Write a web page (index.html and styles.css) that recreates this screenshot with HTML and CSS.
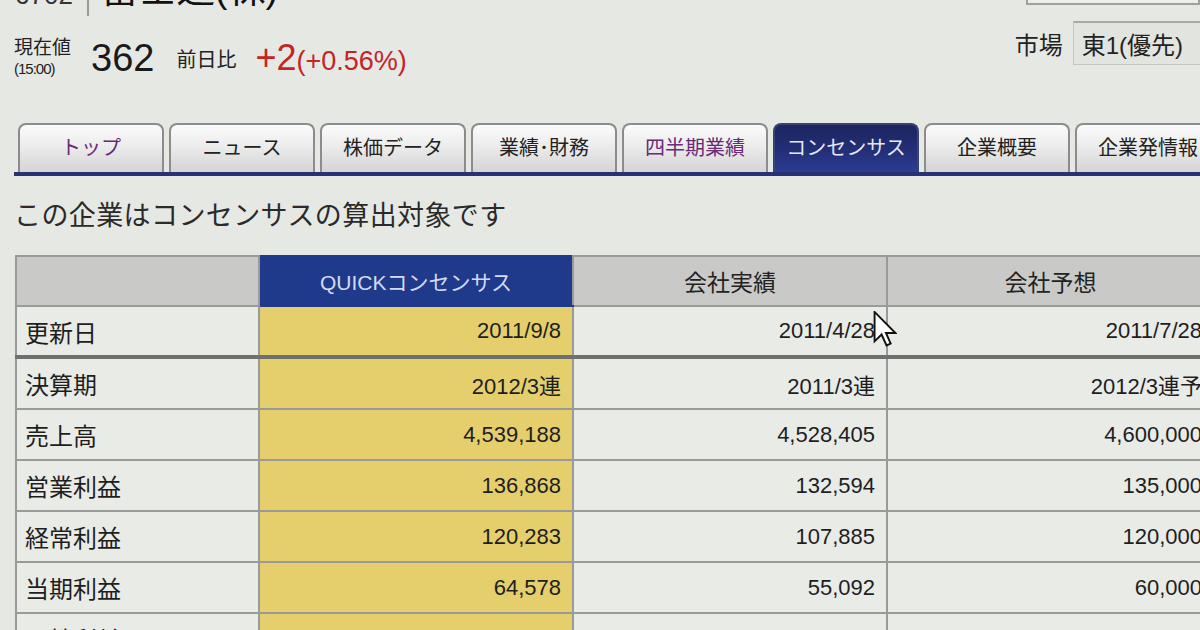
FILE: index.html
```html
<!DOCTYPE html>
<html lang="ja">
  <head>
    <meta charset="UTF-8" />
    <title>富士通(株) コンセンサス</title>
    <link rel="stylesheet" href="styles.css">
  </head>
  <body>
    <div class="page">
      <!-- Stock title, mostly scrolled off the top -->
      <div class="title-row">
        <span class="code">6702</span>
        <span class="sep"></span>
        <span class="name">富士通(株)</span>
        <div class="search-box"></div>
      </div>

      <!-- Price line -->
      <div class="quote-row">
        <div class="now-label">
          <span>現在値</span>
          <span class="time">(15:00)</span>
        </div>
        <span class="price">362</span>
        <span class="chg-label">前日比</span>
        <span class="chg"><span class="chg-big">+2</span>(+0.56%)</span>
        <div class="market">
          <span>市場</span>
          <span class="market-box">東1(優先)</span>
        </div>
      </div>

      <!-- Tabs -->
      <ul class="tabs">
        <li class="tab visited">トップ</li>
        <li class="tab">ニュース</li>
        <li class="tab">株価データ</li>
        <li class="tab">業績･財務</li>
        <li class="tab visited">四半期業績</li>
        <li class="tab active">コンセンサス</li>
        <li class="tab">企業概要</li>
        <li class="tab">企業発情報</li>
      </ul>

      <h2 class="lead">この企業はコンセンサスの算出対象です</h2>

      <div class="table-wrap">
        <table class="consensus">
          <thead>
            <tr>
              <th class="col-label"></th>
              <th class="col-quick">QUICKコンセンサス</th>
              <th class="col-actual">会社実績</th>
              <th>会社予想</th>
            </tr>
          </thead>
          <tbody>
            <tr class="row-updated">
              <td class="label">更新日</td>
              <td class="quick">2011/9/8</td>
              <td>2011/4/28</td>
              <td>2011/7/28</td>
            </tr>
            <tr>
              <td class="label">決算期</td>
              <td class="quick">2012/3連</td>
              <td>2011/3連</td>
              <td>2012/3連予</td>
            </tr>
            <tr>
              <td class="label">売上高</td>
              <td class="quick">4,539,188</td>
              <td>4,528,405</td>
              <td>4,600,000</td>
            </tr>
            <tr>
              <td class="label">営業利益</td>
              <td class="quick">136,868</td>
              <td>132,594</td>
              <td>135,000</td>
            </tr>
            <tr>
              <td class="label">経常利益</td>
              <td class="quick">120,283</td>
              <td>107,885</td>
              <td>120,000</td>
            </tr>
            <tr>
              <td class="label">当期利益</td>
              <td class="quick">64,578</td>
              <td>55,092</td>
              <td>60,000</td>
            </tr>
            <tr>
              <td class="label">一株利益(円)</td>
              <td class="quick">31.20</td>
              <td>26.62</td>
              <td>29.00</td>
            </tr>
          </tbody>
        </table>

        <!-- mouse pointer over the table -->
        <svg class="cursor" width="24" height="36" viewBox="0 0 12 19">
          <path d="M0.5 0.5 L0.5 16 L4.2 12.4 L6.8 18.2 L9 17.2 L6.5 11.6 L11.5 11.6 Z" fill="#fff" stroke="#111" stroke-width="1" stroke-linejoin="miter"/>
        </svg>
      </div>
    </div>
  </body>
</html>
```

FILE: styles.css
```css
html, body {
  margin: 0;
  height: 100%;
  overflow: hidden;
}
body {
  background-color: #e6e8e4;
  color: #1c1c1c;
  font-family: "Liberation Sans", "Noto Sans CJK JP", sans-serif;
}
.page {
  padding-left: 14px;
  width: 1300px;
}

/* title row (cut off at the top) */
.title-row {
  display: flex;
  align-items: flex-end;
  height: 18px;
  margin-top: -26px;
  padding-top: 26px;
  overflow: hidden;
}
.code {
  font-size: 26px;
  line-height: 26px;
  color: #333;
  margin-bottom: 10px;
  margin-left: 1px;
}
.sep {
  width: 2px;
  height: 42px;
  background-color: #9a9a9a;
  margin-left: 14px;
  align-self: flex-end;
  margin-bottom: 2px;
}
.name {
  font-size: 38px;
  line-height: 38px;
  margin-left: 12px;
  margin-bottom: 10px;
  color: #111;
}
.search-box {
  margin-left: auto;
  width: 170px;
  height: 30px;
  margin-right: 114px;
  margin-bottom: 13px;
  border: 2px solid #a0a0a0;
  background-color: #eceeea;
}

/* price row */
.quote-row {
  display: flex;
  align-items: center;
  margin-top: 15px;
  height: 50px;
}
.now-label {
  display: flex;
  flex-direction: column;
  font-size: 19px;
  line-height: 22px;
  color: #222;
}
.now-label .time {
  font-size: 15px;
  line-height: 20px;
  letter-spacing: -1px;
}
.price {
  font-size: 38px;
  margin-left: 20px;
  color: #1a1a1a;
}
.chg-label {
  font-size: 20px;
  margin-left: 22px;
  color: #222;
}
.chg {
  margin-left: 19px;
  color: #c42424;
  font-size: 27px;
}
.chg-big {
  font-size: 36px;
}
.market {
  margin-left: auto;
  margin-right: 100px;
  display: flex;
  align-items: center;
  font-size: 24px;
  margin-top: -30px;
  color: #222;
}
.market-box {
  margin-left: 10px;
  padding: 3px 30px 3px 8px;
  border: 1px solid #c4c6c2;
  border-top: 2px solid #a8aaa6;
  background-color: #e2e4e0;
}

/* tabs */
.tabs {
  list-style: none;
  margin: 40px 0 0 0;
  padding: 0 0 0 4px;
  display: flex;
  gap: 5px;
  border-bottom: 4px solid #283272;
}
.tab {
  flex-shrink: 0;
  width: 142px;
  height: 47px;
  box-sizing: content-box;
  border: 2px solid #8c8c8c;
  border-bottom: none;
  border-radius: 8px 8px 0 0;
  background: linear-gradient(#fbfbfb, #ececec 45%, #d4d4d4);
  font-size: 20px;
  line-height: 47px;
  text-align: center;
  color: #222;
}
.tab.visited {
  color: #6b2a78;
}
.tab.active {
  background: linear-gradient(#1c2560, #23307a 60%, #2c3d94);
  border-color: #3a4270;
  color: #e6e8f4;
}

.lead {
  margin: 22px 0 0 0;
  font-size: 27px;
  letter-spacing: 0.4px;
  font-weight: normal;
  line-height: 36px;
  color: #2a2a2a;
}

/* consensus table */
.table-wrap {
  position: relative;
  margin-top: 21px;
}
.consensus {
  border-collapse: collapse;
  table-layout: fixed;
  width: 1200px;
  margin-left: 1px;
}
.consensus th,
.consensus td {
  border: 2px solid #999b98;
  height: 49px;
  padding: 0 11px;
}
.consensus th {
  background-color: #c9cac7;
  font-weight: normal;
  font-size: 23px;
  color: #222;
  text-align: center;
  height: 48px;
}
.consensus .col-label {
  width: 219px;
}
.consensus .col-quick {
  width: 290px;
  background-color: #203a8b;
  color: #d4daf2;
  font-size: 21px;
  border-color: #203a8b #999b98;
}
.consensus .col-actual {
  width: 290px;
}
.consensus td {
  background-color: #e9ebe7;
  font-size: 22px;
  text-align: right;
  color: #1e1e1e;
}
.consensus td.label {
  text-align: left;
  padding-left: 8px;
  font-size: 24px;
}
.consensus td.quick {
  background-color: #e5cf6c;
}
.consensus .row-updated td {
  border-bottom: 4px solid #6e706d;
  height: 48px;
}

.cursor {
  position: absolute;
  left: 859px;
  top: 56px;
}
```
